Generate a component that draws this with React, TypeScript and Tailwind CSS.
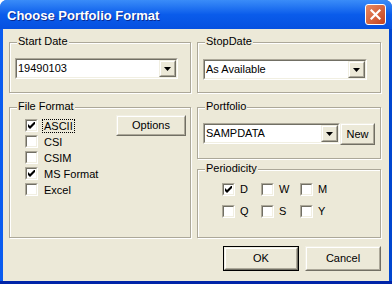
import React from "react";

const font = { fontFamily: '"Liberation Sans", Arial, sans-serif' };

function Raised({ children, className = "" }: { children?: React.ReactNode; className?: string }) {
  return (
    <div className={`flex border border-t-[#f1efe2] border-l-[#f1efe2] border-b-[#716f64] border-r-[#716f64] ${className}`}>
      <div className="flex flex-1 items-center justify-center border border-t-white border-l-white border-b-[#aca899] border-r-[#aca899] bg-[#ece9d8]">
        {children}
      </div>
    </div>
  );
}

function Arrow() {
  return (
    <svg width="7" height="4" viewBox="0 0 7 4">
      <path d="M0 0h7L3.5 4z" fill="#000" />
    </svg>
  );
}

function Combo({ value, className = "" }: { value: string; className?: string }) {
  return (
    <div className={`flex h-[21px] border border-t-[#aca899] border-l-[#aca899] border-b-white border-r-white ${className}`}>
      <div className="flex flex-1 border border-t-[#716f64] border-l-[#716f64] border-b-[#f1efe2] border-r-[#f1efe2] bg-white">
        <span className="flex flex-1 items-center pl-[1px] text-[11px] text-black">{value}</span>
        <Raised className="w-[17px]">
          <Arrow />
        </Raised>
      </div>
    </div>
  );
}

function Check({ checked }: { checked?: boolean }) {
  return (
    <div className="flex h-[13px] w-[13px] shrink-0 border border-t-[#aca899] border-l-[#aca899] border-b-white border-r-white">
      <div className="flex flex-1 items-center justify-center border border-t-[#716f64] border-l-[#716f64] border-b-[#f1efe2] border-r-[#f1efe2] bg-white">
        {checked && (
          <svg width="7" height="7" viewBox="0 0 7 7">
            <path d="M0 2v3l2 2 5-5V-1L2 4z" fill="#000" />
          </svg>
        )}
      </div>
    </div>
  );
}

function Group({ title, className = "", children }: { title: string; className?: string; children?: React.ReactNode }) {
  return (
    <div className={`relative border border-[#aca899] shadow-[inset_1px_1px_0_#fff,1px_1px_0_#fff] ${className}`}>
      <span className="absolute -top-[8px] left-[7px] bg-[#ece9d8] px-[1px] text-[11px] leading-[13px] text-black">
        {title}
      </span>
      {children}
    </div>
  );
}

export default function App() {
  const formats = [
    { label: "ASCII", checked: true, focus: true },
    { label: "CSI" },
    { label: "CSIM" },
    { label: "MS Format", checked: true },
    { label: "Excel" },
  ];
  const periods = [
    [
      { l: "D", c: true },
      { l: "W" },
      { l: "M" },
    ],
    [{ l: "Q" }, { l: "S" }, { l: "Y" }],
  ];

  return (
    <div className="h-[284px] w-[392px] bg-white" style={font}>
      <div className="flex h-full flex-col overflow-hidden rounded-t-[7px] bg-gradient-to-r from-[#0a5cf0] to-[#0046d0]">
        {/* Title bar */}
        <div className="flex h-[29px] shrink-0 items-center bg-gradient-to-b from-[#3a8cf8] via-[#0a5ceb] to-[#0650e0] pl-[7px] pr-[6px]">
          <span className="flex-1 pt-[2px] text-[13px] font-bold text-white [text-shadow:1px_1px_0_#0a2a90]">
            Choose Portfolio Format
          </span>
          <div className="flex h-[21px] w-[21px] items-center justify-center rounded-[3px] border border-white bg-gradient-to-br from-[#e88a62] to-[#c4401c]">
            <svg width="11" height="11" viewBox="0 0 11 11">
              <path d="M1.5 1.5l8 8M9.5 1.5l-8 8" stroke="#fff" strokeWidth="2.2" strokeLinecap="square" />
            </svg>
          </div>
        </div>

        {/* Body */}
        <div className="ml-[3px] mr-[3px] flex flex-1 flex-col bg-[#ece9d8] pl-[6px] pr-[8px] pt-[13px] text-[11px] text-black">
          <div className="flex gap-[6px]">
            <Group title="Start Date" className="h-[51px] w-[182px] shrink-0">
              <Combo value="19490103" className="ml-[5px] mt-[15px] w-[163px]" />
            </Group>
            <Group title="StopDate" className="h-[51px] w-[184px] shrink-0">
              <Combo value="As Available" className="ml-[5px] mt-[16px] w-[164px]" />
            </Group>
          </div>

          <div className="mt-[14px] flex gap-[6px]">
            <Group title="File Format" className="flex h-[131px] w-[182px] shrink-0">
              <div className="ml-[15px] mt-[11px] flex flex-col gap-[3px]">
                {formats.map((f) => (
                  <div key={f.label} className="flex h-[13px] items-center gap-[4px]">
                    <Check checked={f.checked} />
                    <span
                      className={`leading-[12px] ${
                        f.focus ? "border border-dotted border-black px-[1px]" : "border border-transparent px-[1px]"
                      }`}
                    >
                      {f.label}
                    </span>
                  </div>
                ))}
              </div>
              <Raised className="ml-auto mr-[4px] mt-[7px] h-[21px] w-[70px]">
                <span>Options</span>
              </Raised>
            </Group>

            <div className="flex w-[184px] shrink-0 flex-col gap-[10px]">
              <Group title="Portfolio" className="flex h-[52px]">
                <Combo value="SAMPDATA" className="ml-[5px] mt-[15px] w-[137px]" />
                <Raised className="ml-0 mt-[15px] h-[22px] w-[35px]">
                  <span>New</span>
                </Raised>
              </Group>
              <Group title="Periodicity" className="h-[69px]">
                <div className="ml-[24px] mt-[13px] flex flex-col gap-[9px]">
                  {periods.map((row, i) => (
                    <div key={i} className="flex">
                      {row.map((p) => (
                        <div key={p.l} className="flex h-[13px] w-[39px] items-center gap-[5px]">
                          <Check checked={p.c} />
                          <span>{p.l}</span>
                        </div>
                      ))}
                    </div>
                  ))}
                </div>
              </Group>
            </div>
          </div>

          <div className="mt-[8px] flex justify-end gap-[6px]">
            <div className="flex h-[25px] w-[76px] border border-black">
              <Raised className="flex-1">
                <span>OK</span>
              </Raised>
            </div>
            <Raised className="h-[25px] w-[76px]">
              <span>Cancel</span>
            </Raised>
          </div>
        </div>
        <div className="h-[3px] shrink-0 bg-[#0024a8]" />
      </div>
    </div>
  );
}
